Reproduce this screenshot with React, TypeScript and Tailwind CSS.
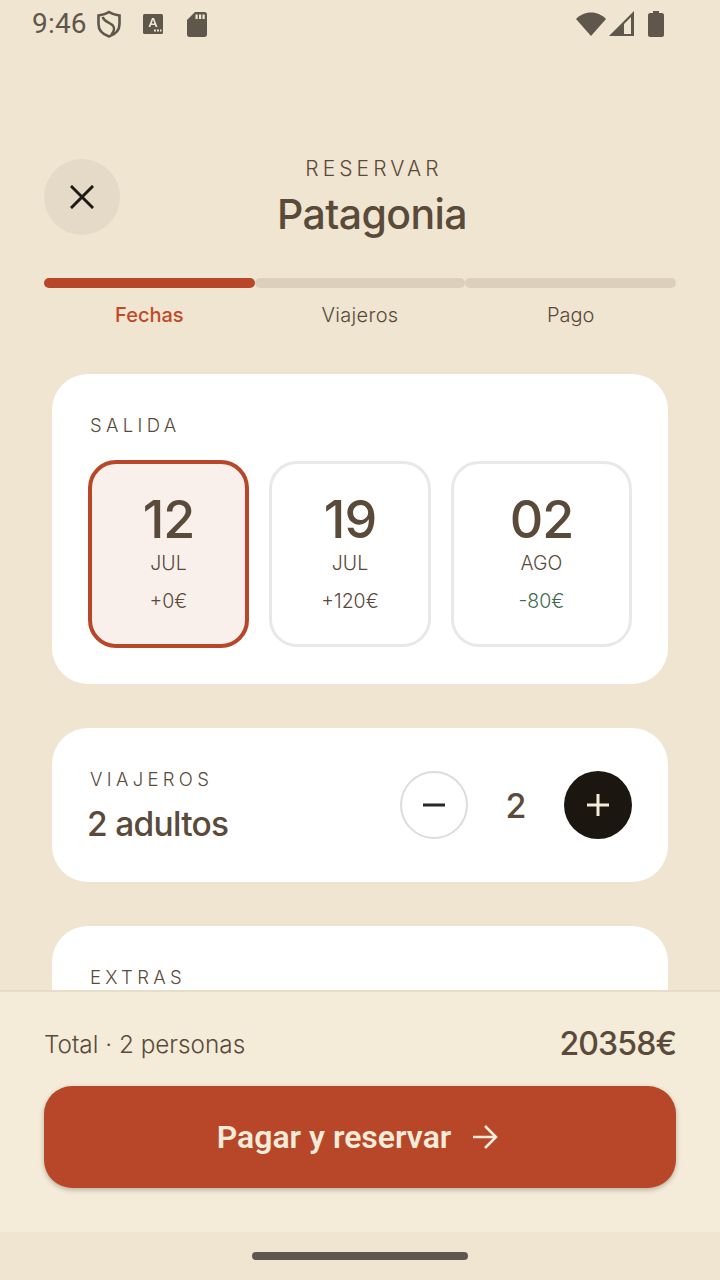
import React from "react";

const ink = "text-[#5a4a3a]";

function StatusBar() {
  return (
    <div className="h-[48px] flex items-center justify-between pl-[32px] pr-[56px] shrink-0 text-[#5f574c]">
      <div className="flex items-center">
        <span className="text-[28px] leading-[48px] tracking-[0.2px] font-['Roboto'] mr-[9px]">9:46</span>
        <svg width="26" height="28" viewBox="0 0 26 28" fill="none" stroke="currentColor" strokeWidth="2.6" className="mr-[21px]">
          <path d="M13 2 C16 4 20 5 23.5 5.5 V14 C23.5 20 19 24.5 13 26.5 C7 24.5 2.5 20 2.5 14 V5.5 C6 5 10 4 13 2 Z" />
          <path d="M6.5 7 C9 13 15 12 17.5 16.5 C18.8 19 17.5 22 15.5 24.5" strokeWidth="2.4" />
        </svg>
        <svg width="20" height="20" viewBox="0 0 20 20" className="mr-[24px]">
          <rect x="0" y="0" width="20" height="20" rx="1.5" fill="currentColor" />
          <path d="M5.5 13 L9 4 H11 L14.5 13 H12.6 L11.9 11 H8.1 L7.4 13 Z M8.7 9.4 H11.3 L10 5.8 Z" fill="#f0e5d1" />
          <rect x="11" y="15.5" width="2" height="2" fill="#f0e5d1" />
          <rect x="14" y="15.5" width="2" height="2" fill="#f0e5d1" />
          <rect x="17" y="15.5" width="1.6" height="2" fill="#f0e5d1" />
        </svg>
        <svg width="20" height="25" viewBox="0 0 20 25">
          <path d="M8 0 H17.5 C19 0 20 1 20 2.5 V22.5 C20 24 19 25 17.5 25 H2.5 C1 25 0 24 0 22.5 V8 Z" fill="currentColor" />
          <rect x="8.5" y="2.5" width="2.2" height="4.5" fill="#f0e5d1" />
          <rect x="12" y="2.5" width="2.2" height="4.5" fill="#f0e5d1" />
          <rect x="15.5" y="2.5" width="2.2" height="4.5" fill="#f0e5d1" />
        </svg>
      </div>
      <div className="flex items-center">
        <svg width="30" height="24" viewBox="0 0 30 24" className="mr-[3px]">
          <path d="M0 7 C4 3 9 0.5 15 0.5 C21 0.5 26 3 30 7 L15 24 Z" fill="currentColor" />
        </svg>
        <svg width="26" height="26" viewBox="0 0 26 26" className="mr-[13px]">
          <path d="M0 25 L25 0 V25 Z M15 23 H22 V6 L15 13 Z" fill="currentColor" fillRule="evenodd" />
        </svg>
        <svg width="16" height="26" viewBox="0 0 16 26">
          <path d="M5 0 H11 V2 H14 C15 2 16 3 16 4 V24 C16 25 15 26 14 26 H2 C1 26 0 25 0 24 V4 C0 3 1 2 2 2 H5 Z" fill="currentColor" />
        </svg>
      </div>
    </div>
  );
}

function Label({ children }: { children: React.ReactNode }) {
  return <div className={`font-['Inter'] font-light text-[18.5px] leading-[24px] tracking-[4.3px] ${ink}`}>{children}</div>;
}

function DateCell({ day, month, price, width, selected, green }: { day: string; month: string; price: string; width: string; selected?: boolean; green?: boolean }) {
  return (
    <div
      className={`${width} flex flex-col items-center rounded-[28px] ${
        selected ? "h-[188px] border-[4px] border-[#b74728] bg-[#f9f0ec] pt-[27px]" : "h-[186px] border-[3px] border-[#e8e8e8] bg-white pt-[27px]"
      }`}
    >
      <div className={`font-['Inter'] text-[52px] leading-[58px] font-medium tracking-[-1px] ${ink}`}>{day}</div>
      <div className={`font-['Inter'] font-light text-[19.5px] leading-[24px] mt-[2px] ${ink}`}>{month}</div>
      <div className={`font-['Inter'] font-light text-[19.5px] leading-[24px] mt-[14px] ${green ? "text-[#3f6b4f]" : ink}`}>{price}</div>
    </div>
  );
}

export default function App() {
  return (
    <div className="w-[720px] h-[1280px] bg-[#f0e5d1] flex flex-col overflow-hidden font-['Inter']">
      <StatusBar />
      <div className="flex-1 min-h-0 flex flex-col overflow-hidden">
        <div className="flex items-start px-[44px] pt-[111px] h-[187px] shrink-0">
          <button className="w-[76px] h-[76px] rounded-full bg-[#e4dac7] flex items-center justify-center shrink-0">
            <svg width="24" height="24" viewBox="0 0 24 24" fill="none" stroke="#1e1a16" strokeWidth="3" strokeLinecap="square">
              <path d="M2 2 L22 22 M22 2 L2 22" />
            </svg>
          </button>
          <div className="flex-1 pr-[52px] text-center">
            <div className={`text-[21px] leading-[20px] font-light tracking-[4.1px] pl-[4px] ${ink}`}>RESERVAR</div>
            <div className={`text-[41px] leading-[48px] mt-[11px] font-medium tracking-[-0.6px] ${ink}`}>Patagonia</div>
          </div>
        </div>

        <div className="px-[44px] mt-[43px] shrink-0">
          <div className="flex">
            <div className="flex-1 h-[10px] rounded-full bg-[#b74728]" />
            <div className="flex-1 h-[10px] rounded-full bg-[#dccfbc]" />
            <div className="flex-1 h-[10px] rounded-full bg-[#dccfbc]" />
          </div>
          <div className="flex mt-[14px]">
            <div className="flex-1 text-center text-[20px] leading-[27px] font-medium text-[#bf4a2a]">Fechas</div>
            <div className={`flex-1 text-center text-[20px] leading-[27px] font-light tracking-[0.3px] ${ink}`}>Viajeros</div>
            <div className={`flex-1 text-center text-[20px] leading-[27px] font-light ${ink}`}>Pago</div>
          </div>
        </div>

        <div className="px-[52px] mt-[45px] flex flex-col gap-[44px]">
          <section className="bg-white rounded-[36px] h-[310px] pt-[39px] pl-[36px] pr-[36px] shrink-0">
            <div className="pl-[2px]"><Label>SALIDA</Label></div>
            <div className="flex items-center mt-[23px]">
              <DateCell day="12" month="JUL" price="+0€" width="w-[161px]" selected />
              <div className="ml-[20px]"><DateCell day="19" month="JUL" price="+120€" width="w-[162px]" /></div>
              <div className="ml-[20px]"><DateCell day="02" month="AGO" price="-80€" width="w-[181px]" green /></div>
            </div>
          </section>

          <section className="bg-white rounded-[36px] h-[154px] pl-[36px] pr-[36px] flex items-center justify-between shrink-0">
            <div>
              <div className="pl-[2px]"><Label>VIAJEROS</Label></div>
              <div className={`text-[33.5px] leading-[40px] mt-[13px] font-medium tracking-[-0.7px] -ml-[1px] ${ink}`}>2 adultos</div>
            </div>
            <div className="flex items-center">
              <button className="w-[68px] h-[68px] rounded-full border-2 border-[#dcdcdc] flex items-center justify-center">
                <svg width="22" height="4" viewBox="0 0 22 4"><rect width="22" height="3" y="0.5" fill="#2a2622" /></svg>
              </button>
              <div className={`w-[96px] text-center text-[34px] leading-[44px] pt-[2px] font-medium ${ink}`}>2</div>
              <button className="w-[68px] h-[68px] rounded-full bg-[#1b1610] flex items-center justify-center">
                <svg width="22" height="22" viewBox="0 0 22 22"><path d="M0 9.5 H9.5 V0 H12.5 V9.5 H22 V12.5 H12.5 V22 H9.5 V12.5 H0 Z" fill="#f4ebd9" /></svg>
              </button>
            </div>
          </section>

          <section className="bg-white rounded-[36px] h-[300px] pt-[39px] pl-[38px] shrink-0">
            <Label>EXTRAS</Label>
          </section>
        </div>
      </div>

      <div className="h-[242px] shrink-0 bg-[#f4ebd9] border-t-2 border-[#e6dcc9] px-[44px] pt-[32px]">
        <div className="flex items-center justify-between h-[40px]">
          <div className={`text-[24.3px] leading-[40px] font-light ${ink}`}>Total · 2 personas</div>
          <div className={`text-[32px] leading-[40px] font-medium tracking-[-0.9px] ${ink}`}>20358€</div>
        </div>
        <button className="mt-[22px] w-full h-[102px] rounded-[28px] bg-[#b74728] shadow-[0_2px_5px_rgba(0,0,0,0.25)] flex items-center justify-center pr-[4px]">
          <span className="font-['Roboto'] font-semibold text-[32px] text-[#f4ebd9]">Pagar y reservar</span>
          <svg width="28" height="26" viewBox="0 0 28 26" fill="none" stroke="#f4ebd9" strokeWidth="2.6" className="ml-[20px]">
            <path d="M2 13 H25 M14 2 L25 13 L14 24" />
          </svg>
        </button>
      </div>

      <div className="h-[48px] shrink-0 flex justify-center pt-[20px]">
        <div className="w-[216px] h-[8px] rounded-full bg-[#5f574e]" />
      </div>
    </div>
  );
}
